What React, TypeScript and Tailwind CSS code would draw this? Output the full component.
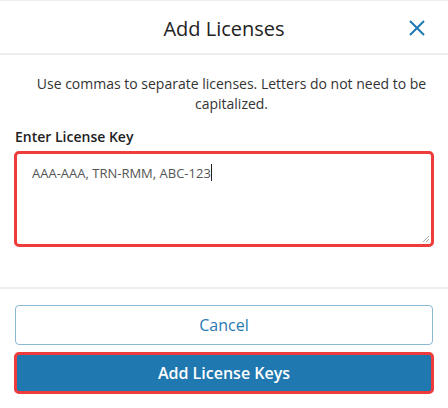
export default function App() {
  return (
    <div className="w-[448px] h-[408px] bg-white border-t border-[#efefef] font-['Open_Sans',sans-serif] flex flex-col">
      {/* Header */}
      <div className="relative h-[54px] pt-[3px] flex items-center justify-center border-b-2 border-[#eeeeee]">
        <h2 className="text-[20px] text-[#222] leading-none">Add Licenses</h2>
        <button className="absolute right-[23px] top-[19px] text-[#1f78b4]">
          <svg width="16" height="16" viewBox="0 0 16 16" fill="none" stroke="currentColor" strokeWidth="2">
            <path d="M1 1L15 15M15 1L1 15" />
          </svg>
        </button>
      </div>

      {/* Body */}
      <div className="h-[234px] px-[14px] pt-[19px] border-b-2 border-[#eeeeee]">
        <p className="pl-[16px] pr-[1px] text-center text-[14px] leading-[20px] text-[#333]">
          Use commas to separate licenses. Letters do not need to be capitalized.
        </p>
        <label className="block mt-[13px] mb-[4px] pl-[1px] text-[14px] leading-[20px] font-semibold text-[#222]">
          Enter License Key
        </label>
        <div className="relative h-[96px] border-[3px] border-[#ee3b3b] rounded-[5px] px-[15px] py-[6px]">
          <span className="text-[13px] leading-[18px] text-[#555]">AAA-AAA, TRN-RMM, ABC-123</span>
          <span className="inline-block align-middle w-px h-[17px] bg-[#222] -mt-[2px]" />
          <svg className="absolute right-[1px] bottom-[1px]" width="8" height="8" viewBox="0 0 8 8">
            <path d="M7 1L1 7M7 4L4 7" stroke="#aaa" strokeWidth="1" />
          </svg>
        </div>
      </div>

      {/* Footer */}
      <div className="flex flex-col pt-[16px]">
        <button className="mx-[15px] h-[40px] rounded-[4px] border border-[#8ab9d6] text-[16px] text-[#2a7ab3]">
          Cancel
        </button>
        <button className="mx-[14px] mt-[7px] h-[42px] rounded-[5px] border-[3px] border-[#ee3b3b] bg-[#1f78b0] text-[16px] font-semibold text-white">
          Add License Keys
        </button>
      </div>
    </div>
  );
}
